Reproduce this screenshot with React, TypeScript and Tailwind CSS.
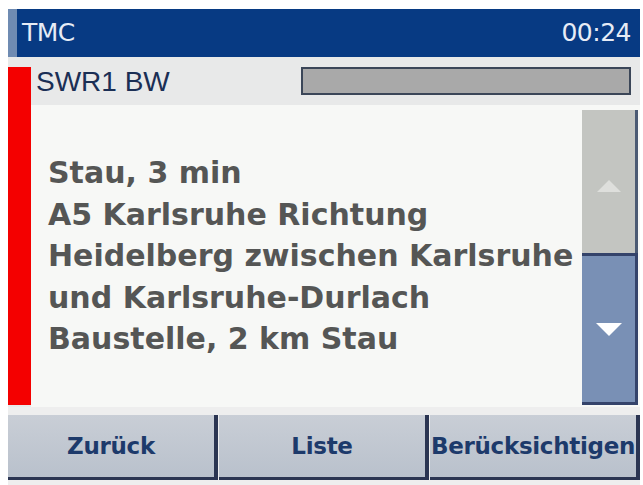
import React from 'react';

const lines = [
  'Stau, 3 min',
  'A5 Karlsruhe Richtung',
  'Heidelberg zwischen Karlsruhe',
  'und Karlsruhe-Durlach',
  'Baustelle, 2 km Stau',
];

const buttons = ['Zurück', 'Liste', 'Berücksichtigen'];

const narrow = { fontFamily: '"DejaVu Sans", sans-serif' };

export default function App() {
  return (
    <div className="w-[643px] h-[485px] bg-white pt-[9px] pl-[8px] pr-[3px] flex flex-col overflow-hidden">
      {/* title bar */}
      <div className="h-[48px] flex bg-[#073a83]">
        <div className="w-[9px] bg-[#6f8bb2]" />
        <div className="flex-1 flex items-center justify-between pl-[5px] pr-[9px] text-[#e6ecf6] text-[25px] tracking-[-0.5px]" style={narrow}>
          <span>TMC</span>
          <span>00:24</span>
        </div>
      </div>

      {/* message area */}
      <div className="h-[350px] flex bg-[#e8e9e9]">
        <div className="w-[23px] mt-[10px] h-[338px] bg-[#f40000]" />
        <div className="flex-1 flex flex-col">
          <div className="h-[48px] flex items-center justify-between pl-[5px] pr-[9px] pt-[2px]">
            <span className="text-[28px] text-[#1b2f55]" style={{ fontFamily: '"Liberation Sans", Arial, sans-serif' }}>SWR1 BW</span>
            <div className="w-[330px] h-[28px] bg-[#a9a9a9] border-2 border-[#3b4658] mb-[2px]" />
          </div>
          <div className="flex-1 flex bg-[#f7f8f6] pb-[2px]">
            <div
              className="flex-1 pl-[17px] pt-[47px] text-[30px] leading-[41.5px] font-bold text-[#555655]"
              style={{ fontFamily: '"DejaVu Sans", Verdana, sans-serif' }}
            >
              {lines.map((l) => (
                <div key={l} className="whitespace-nowrap">{l}</div>
              ))}
            </div>
            <div className="w-[56px] mr-[2px] mt-[5px] flex flex-col">
              <div className="h-[143px] bg-[#c3c5c1] border-r-[3px] border-[#4b5a73] flex items-center justify-center pt-[8px]">
                <svg width="24" height="12" viewBox="0 0 24 12"><polygon points="0,12 24,12 12,0" fill="#dedfdc" /></svg>
              </div>
              <div className="flex-1 bg-[#7990b5] border-r-[3px] border-b-[3px] border-t-[3px] border-[#34436a] flex items-center justify-center">
                <svg width="26" height="13" viewBox="0 0 26 13"><polygon points="0,0 26,0 13,13" fill="#ffffff" /></svg>
              </div>
            </div>
          </div>
        </div>
      </div>

      {/* buttons */}
      <div className="flex-1 bg-[#eeeeee] pt-[8px] pb-[5px] grid grid-cols-3 gap-[1px]">
        {buttons.map((b) => (
          <div
            key={b}
            className="flex items-center justify-center bg-gradient-to-b from-[#c9ced6] to-[#b9c1cc] border-r-[4px] border-b-[3px] border-[#2b3552] text-[23px] font-bold text-[#1d3a6b] tracking-[-0.3px]"
            style={narrow}
          >
            {b}
          </div>
        ))}
      </div>
    </div>
  );
}
